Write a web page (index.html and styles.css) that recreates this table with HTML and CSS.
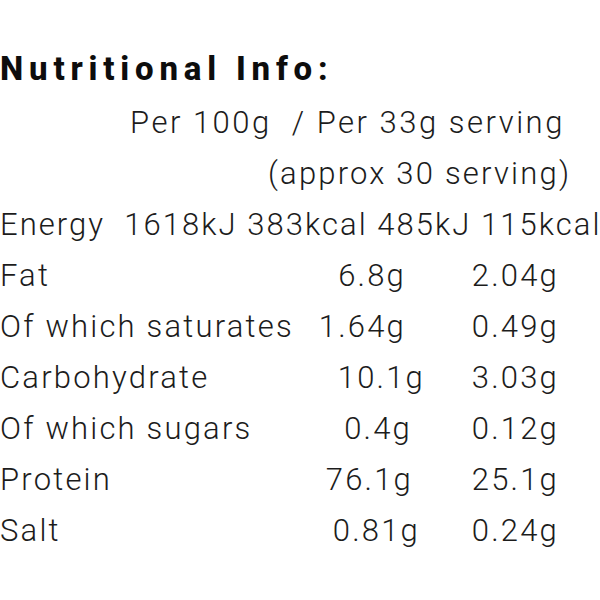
FILE: index.html
```html
<!DOCTYPE html>
<html>
<head>
<meta charset="utf-8">
<link rel="stylesheet" href="styles.css">
</head>
<body>
<div class="panel">
  <h1 class="title">Nutritional Info:</h1>
  <div class="line head-1">Per 100g&nbsp; / Per 33g serving</div>
  <div class="line head-2">(approx 30 serving)</div>
  <div class="line energy">Energy&nbsp; 1618kJ 383kcal 485kJ 115kcal</div>
  <div class="row"><span class="label">Fat</span><span class="v1">6.8g</span><span class="v2">2.04g</span></div>
  <div class="row"><span class="label">Of which saturates</span><span class="v1">1.64g</span><span class="v2">0.49g</span></div>
  <div class="row"><span class="label">Carbohydrate</span><span class="v1 shift-19">10.1g</span><span class="v2">3.03g</span></div>
  <div class="row"><span class="label">Of which sugars</span><span class="v1 shift-6">0.4g</span><span class="v2">0.12g</span></div>
  <div class="row"><span class="label">Protein</span><span class="v1 shift-7">76.1g</span><span class="v2">25.1g</span></div>
  <div class="row"><span class="label">Salt</span><span class="v1 shift-14">0.81g</span><span class="v2">0.24g</span></div>
</div>
</body>
</html>
```

FILE: styles.css
```css
html, body {
  margin: 0;
  padding: 0;
  background: #ffffff;
}
body {
  width: 600px;
  height: 600px;
  overflow: hidden;
  font-family: Roboto, "Liberation Sans", sans-serif;
  color: #1c1c1c;
}
.panel {
  padding-top: 43px;
}
.title {
  margin: 0 0 3px 0;
  font-size: 33px;
  line-height: 51px;
  font-weight: 800;
  letter-spacing: 5.8px;
  color: #0d0d0d;
  white-space: nowrap;
}
.line, .row {
  font-size: 31px;
  line-height: 51px;
  font-weight: 300;
  letter-spacing: 2.2px;
  white-space: nowrap;
}
.energy { letter-spacing: 2.05px; }
.head-1 { padding-left: 130px; letter-spacing: 2.5px; }
.head-2 { padding-left: 268px; }
.row {
  display: grid;
  grid-template-columns: 1fr 100px 153px;
  width: 559px;
}
.v1, .v2 {
  text-align: right;
}
.v1 { position: relative; }
.shift-19 { left: 19px; }
.shift-6 { left: 6px; }
.shift-7 { left: 7px; }
.shift-14 { left: 14px; }
```
